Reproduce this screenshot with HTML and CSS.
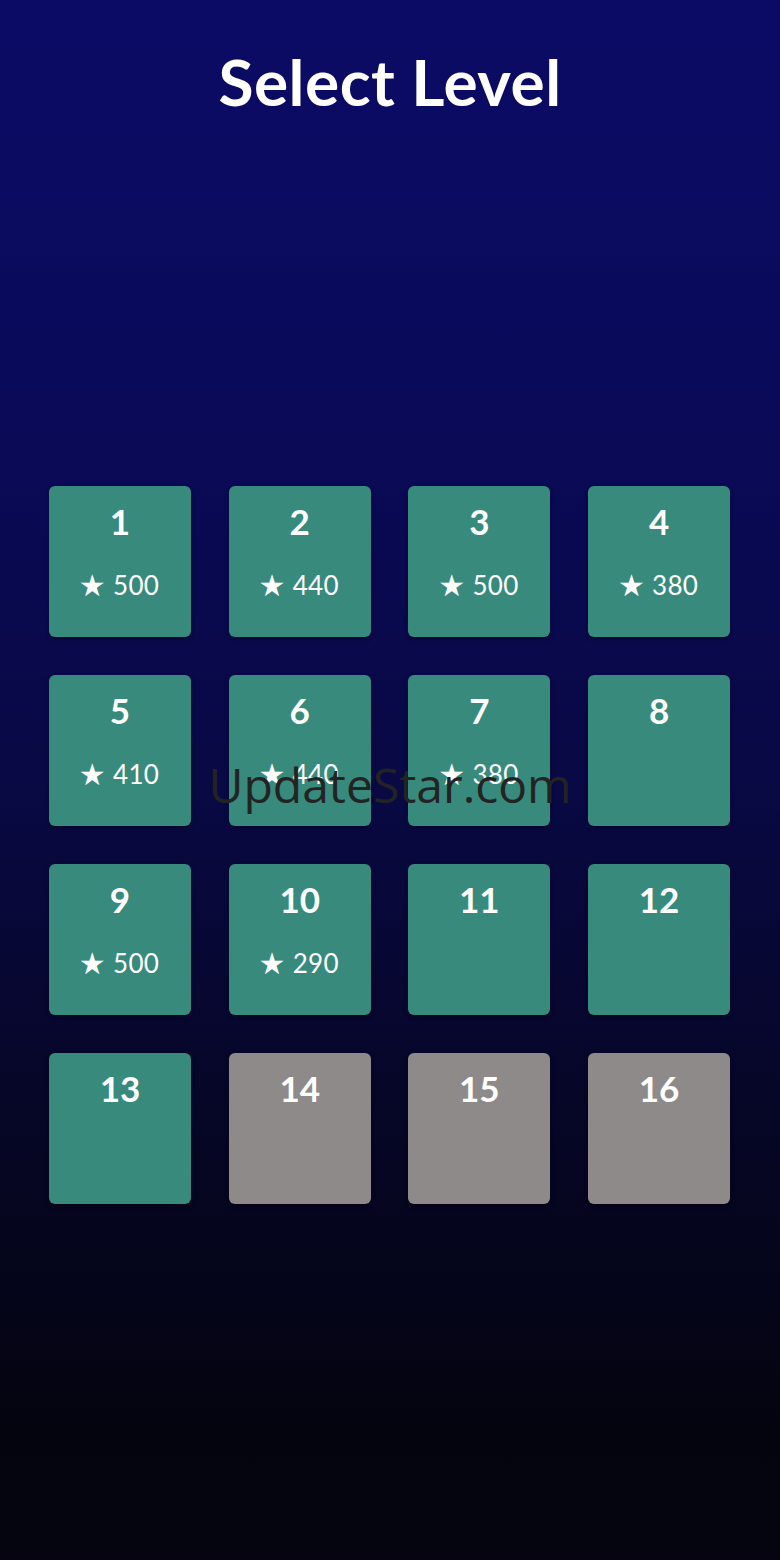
FILE: index.html
```html
<!DOCTYPE html>
<html>
<head>
	<title>Select Level</title>
	<link rel="stylesheet" href="styles.css">
</head>
<body>

	<div class="page">
		<div class="title_box">
			<h1 class="title">Select Level</h1>
		</div>

		<div class="levels">
			<div class="level"><div class="num">1</div><div class="score"><span class="star">&#9733;</span> 500</div></div>
			<div class="level"><div class="num">2</div><div class="score"><span class="star">&#9733;</span> 440</div></div>
			<div class="level"><div class="num">3</div><div class="score"><span class="star">&#9733;</span> 500</div></div>
			<div class="level"><div class="num">4</div><div class="score"><span class="star">&#9733;</span> 380</div></div>

			<div class="level"><div class="num">5</div><div class="score"><span class="star">&#9733;</span> 410</div></div>
			<div class="level"><div class="num">6</div><div class="score"><span class="star">&#9733;</span> 440</div></div>
			<div class="level"><div class="num">7</div><div class="score"><span class="star">&#9733;</span> 380</div></div>
			<div class="level"><div class="num">8</div></div>

			<div class="level"><div class="num">9</div><div class="score"><span class="star">&#9733;</span> 500</div></div>
			<div class="level"><div class="num">10</div><div class="score"><span class="star">&#9733;</span> 290</div></div>
			<div class="level"><div class="num">11</div></div>
			<div class="level"><div class="num">12</div></div>

			<div class="level"><div class="num">13</div></div>
			<div class="level locked"><div class="num">14</div></div>
			<div class="level locked"><div class="num">15</div></div>
			<div class="level locked"><div class="num">16</div></div>
		</div>

		<div class="watermark">UpdateStar.com</div>
	</div>

</body>
</html>
```

FILE: styles.css
```css
html, body {margin: 0; padding: 0;}
body {background: #04040f; font-family: "Lato", "Noto Sans", sans-serif; color: white;}
.page {position: relative; height: 1560px; overflow: hidden;
		background: linear-gradient(to bottom, #0b0b66 0%, #0a0a5a 25%, #090945 50%, #060628 70%, #04040f 92%, #050410 100%);}
.title_box {height: 486px; text-align: center;}
.title {margin: 0; padding-top: 44px; font-size: 64px; font-weight: 700; line-height: 76px; letter-spacing: 0.5px;}
.levels {display: grid; grid-template-columns: repeat(4, 142px); grid-auto-rows: 151px;
		column-gap: 37.7px; row-gap: 38px; padding-left: 49px;}
.level {background: #388a7c; border-radius: 6px; text-align: center;
		box-shadow: 0 2px 4px rgba(0,0,0,0.35);}
.level.locked {background: #8f8a8a;}
.num {font-size: 35px; font-weight: 700; line-height: 40px; padding-top: 15px;}
.score {font-size: 26px; line-height: 30px; margin-top: 29px; letter-spacing: 0.3px; padding-right: 2px;}
.star {font-size: 30px; font-family: "DejaVu Sans", sans-serif; vertical-align: -1px;}
.watermark {position: absolute; top: 756px; left: 0; right: 0; text-align: center;
		font-family: "Open Sans", sans-serif; font-size: 48px; line-height: 58px; color: #232323;}
```
